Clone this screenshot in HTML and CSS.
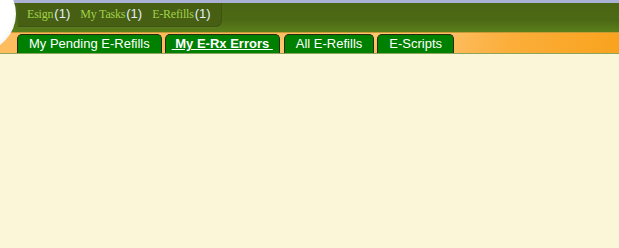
FILE: index.html
```html
<!DOCTYPE html>
<html lang="en">
<head>
    <meta charset="UTF-8">
    <title>E-Refills</title>
    <link rel="stylesheet" href="styles.css">
</head>
<body>
    <div id="area-header">
        <div class="logo-disc"></div>
        <div class="top-stripe"></div>
        <div class="green-bar">
            <div class="task-box">
                <a href="#">Esign</a><span class="count">(1)</span>
                <a href="#">My Tasks</a><span class="count">(1)</span>
                <a href="#">E-Refills</a><span class="count">(1)</span>
            </div>
        </div>
        <div class="tab-bar">
            <a class="tab" href="#">My Pending E-Refills</a>
            <a class="tab active" href="#">&nbsp;My E-Rx Errors&nbsp;</a>
            <a class="tab" href="#">All E-Refills</a>
            <a class="tab" href="#">E-Scripts</a>
        </div>
    </div>
    <div class="content"></div>
</body>
</html>
```

FILE: styles.css
```css
body {
    margin: 0;
    background-color: #fcf6d9;
    font-family: "Liberation Sans", Arial, sans-serif;
}
#area-header {
    position: relative;
    overflow: hidden;
}
.logo-disc {
    position: absolute;
    left: -60px;
    top: -24px;
    width: 76px;
    height: 76px;
    border-radius: 50%;
    background: radial-gradient(circle at 35% 40%, #ffffff 0%, #ffffff 70%, #e4e4e4 88%, #b8b8b8 100%);
    z-index: 2;
}
.top-stripe {
    height: 3px;
    background-color: #aab3d6;
}
.green-bar {
    height: 29px;
    background: linear-gradient(#4a6414, #4c6a15 60%, #5a7f1a);
}
.task-box {
    display: flex;
    align-items: baseline;
    margin-left: 18px;
    width: 194px;
    height: 23px;
    padding-left: 9px;
    background-color: #465f12;
    border-right: 1px solid #3e5410;
    border-bottom: 1px solid #3e5410;
    border-bottom-right-radius: 6px;
    box-shadow: 0 1px 0 #5c7a22;
}
.task-box a {
    font-family: "Liberation Serif", "Times New Roman", serif;
    font-size: 12px;
    color: #a2d14c;
    text-decoration: none;
    letter-spacing: -0.2px;
    line-height: 23px;
}
.count {
    font-size: 13px;
    color: #e4f0ff;
    margin-left: 1px;
    margin-right: 10px;
}
.tab-bar {
    display: flex;
    align-items: flex-end;
    gap: 3px;
    height: 20px;
    padding-left: 17px;
    background:
        linear-gradient(172deg, rgba(255, 255, 255, 0) 35%, rgba(255, 214, 140, 0.45) 50%, rgba(255, 255, 255, 0) 65%),
        linear-gradient(100deg, #fdbc5e 0%, #fdbd60 72%, #fbae3a 82%, #f9a31e 100%);
    border-top: 1px solid #c99b35;
    border-bottom: 1px solid #8ba55e;
}
.tab {
    display: block;
    height: 19px;
    line-height: 18px;
    padding: 0 11px;
    background-color: #008000;
    border: 1px solid #2a2a10;
    border-bottom: none;
    border-radius: 5px 5px 0 0;
    color: #ffffff;
    font-size: 13px;
    text-decoration: none;
    box-sizing: border-box;
}
.tab.active {
    font-weight: bold;
    text-decoration: underline;
    padding: 0 6px;
    margin-right: 1px;
}
.content {
    height: 194px;
}
```
